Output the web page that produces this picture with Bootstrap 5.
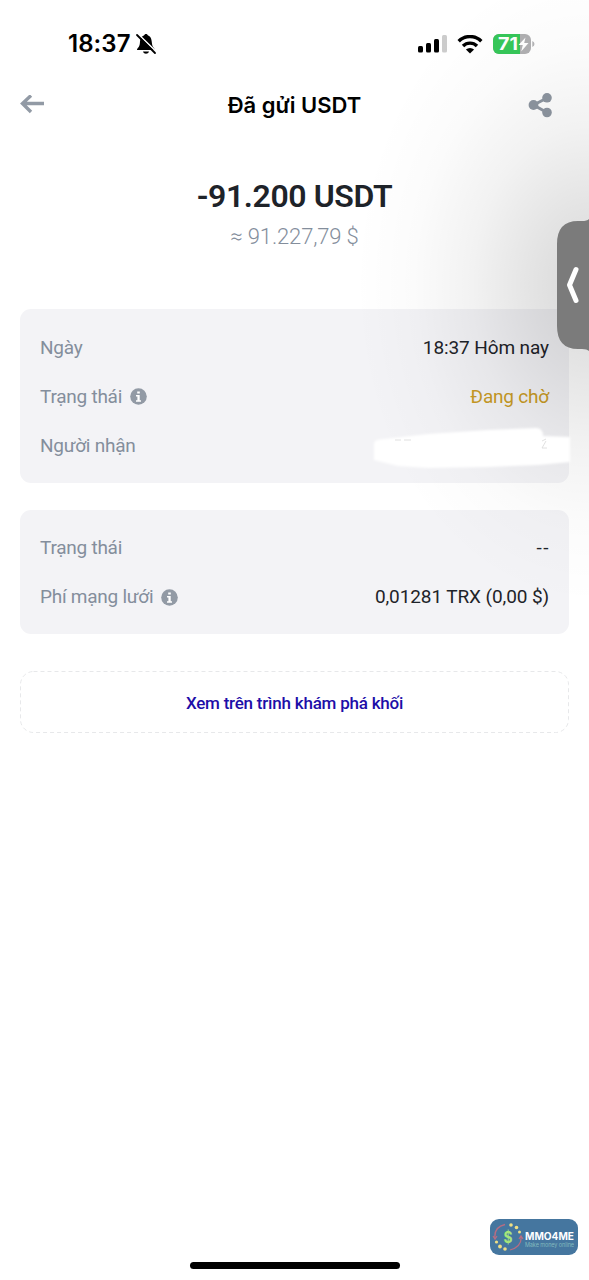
<!DOCTYPE html>
<html lang="vi">
<head>
<meta charset="utf-8">
<meta name="viewport" content="width=device-width, initial-scale=1">
<title>Đã gửi USDT</title>
<link rel="stylesheet" href="https://cdn.jsdelivr.net/npm/bootstrap@5.3.0/dist/css/bootstrap.min.css">
<style>
body{font-family:Roboto,"Noto Sans",sans-serif;color:#1e2329;background:#fff}
.screen{width:589px;height:1280px}
.statusbar{height:80px;padding:8px 54px 0 68px;font-family:Inter,sans-serif;color:#000}
.clock{font-size:24px;font-weight:600;letter-spacing:.05px}
.topbar{height:50px;padding:0 36px 0 20px}
.topbar h1{font:600 22px/1 Inter,sans-serif;color:#000;letter-spacing:0;padding-left:16px}
.amount{font-size:32px;font-weight:600;line-height:40px;letter-spacing:-.4px;padding-top:46px}
.approx{font-size:22px;line-height:30px;color:#848e9c;font-weight:300;letter-spacing:-.15px;margin-top:6px}
.panel{background:#f3f3f6;border-radius:11px;padding:14px 20px 12px;margin:0 20px}
.line{height:49.2px;font-size:19px;letter-spacing:-.1px}
.key{color:#848e9c;letter-spacing:-.25px}
.date{padding-top:2px}
.wait{color:#c99b25;letter-spacing:-.2px}
.explorer{margin:37px 20px 0;height:62px;font-size:17px;font-weight:500;color:#1d0ea8;text-decoration:none;letter-spacing:-.22px}
.shade{right:0;top:0;width:260px;height:640px;background:radial-gradient(ellipse 235px 320px at 260px 285px,rgba(0,0,0,.155),rgba(0,0,0,.105) 25%,rgba(0,0,0,.05) 50%,rgba(0,0,0,.015) 75%,transparent);pointer-events:none}
.handle{right:0;top:217px}
.scrub{left:368px;top:424px}
.home{left:190px;top:1262px;width:210px;height:7px;background:#000}
.brand{left:490px;top:1219px}
</style>
</head>
<body>
<main class="screen position-relative overflow-hidden">
  <header class="statusbar d-flex align-items-center justify-content-between">
    <div class="d-flex align-items-center">
      <span class="clock">18:37</span>
      <svg class="ms-1" width="22" height="22" viewBox="0 0 22 22"><path d="M2 17c0-2 2.600-2.500 2.900-7C5.100 5 7 3.300 9 2.600c.5-2.300 3.500-2.300 4 0 2 .7 3.600 2.400 3.900 7.400.3 4.500 2.900 5 2.900 7zM8 18.500h6c-.8 3-5.200 3-6 0z"/><path d="M2.500 .5 21.500 19" stroke="#fff" stroke-width="1.600"/><path d="M2 2 20 20" stroke="#000" stroke-width="1.800" stroke-linecap="round"/></svg>
    </div>
    <div class="d-flex align-items-center">
      <svg width="29" height="18" viewBox="0 0 29 18"><rect y="11" width="5" height="6.500" rx="1.500"/><rect x="8" y="8" width="5" height="9.500" rx="1.500"/><rect x="16" y="4" width="5" height="13.500" rx="1.500"/><rect x="24" width="5" height="17.500" rx="1.500" fill="#ccc"/></svg>
      <svg style="margin-left:10px" width="26" height="19" viewBox="0 0 26 19" fill="none" stroke="#000" stroke-width="3.400"><path d="M1.700 6.200a16 16 0 0 1 22.600 0M6 11a10 10 0 0 1 14 0"/><path d="M13 18.500 8.900 14.500a6 6 0 0 1 8.200 0z" fill="#000" stroke="none"/></svg>
      <svg style="margin-left:10px" width="42" height="20" viewBox="0 0 42 20"><defs><clipPath id="cell"><rect width="38" height="20" rx="6"/></clipPath></defs><g clip-path="url(#cell)"><rect width="38" height="20" fill="#b0b0b2"/><rect width="27" height="20" fill="#36c759"/></g><path d="M39.300 7v6q2.200-1 2.200-3t-2.200-3" fill="#b4b4b6"/><text x="5" y="16.300" font-size="17.500" font-weight="700" fill="#fff" textLength="20" lengthAdjust="spacingAndGlyphs">71</text><path d="M32.500 3.500 25.500 11h4.300l-1.600 6.500L35.500 9h-4.300z" fill="#fff"/></svg>
    </div>
  </header>
  <nav class="topbar d-flex align-items-center justify-content-between">
    <svg width="25" height="20" viewBox="0 0 25 20" fill="none" stroke="#929aa5" stroke-width="3.400"><path d="M24 8.500H3M11 .5 2.500 8.500l8.500 8.500"/></svg>
    <h1 class="mb-0">Đã gửi USDT</h1>
    <svg width="25" height="25" viewBox="0 0 25 25" fill="#8e96a1"><path d="M19 5 5.500 12 19 19.500" fill="none" stroke="#8e96a1" stroke-width="3"/><circle cx="19" cy="4.800" r="4.800"/><circle cx="5.500" cy="12" r="4.900"/><circle cx="19" cy="19.500" r="4.800"/></svg>
  </nav>
  <section class="text-center">
    <div class="amount">-91.200 USDT</div>
    <div class="approx">≈ 91.227,79 $</div>
  </section>
  <section class="panel" style="margin-top:57px">
    <div class="line d-flex align-items-center justify-content-between date"><span class="key">Ngày</span><span>18:37 Hôm nay</span></div>
    <div class="line d-flex align-items-center justify-content-between"><span class="key d-flex align-items-center gap-2">Trạng thái <svg width="17" height="17" viewBox="0 0 17 17"><circle cx="8.500" cy="8.500" r="8.300" fill="#929aa5"/><path d="M7.200 3.500h2.600v2H7.200zM6 7h3.700v5.200H11v1.500H6v-1.500h1.400V8.500H6z" fill="#fff"/></svg></span><span class="wait">Đang chờ</span></div>
    <div class="line d-flex align-items-center"><span class="key">Người nhận</span></div>
  </section>
  <section class="panel" style="margin-top:27px">
    <div class="line d-flex align-items-center justify-content-between"><span class="key">Trạng thái</span><span style="letter-spacing:1.500px;margin-right:-1px">--</span></div>
    <div class="line d-flex align-items-center justify-content-between"><span class="key d-flex align-items-center gap-2">Phí mạng lưới <svg width="17" height="17" viewBox="0 0 17 17"><circle cx="8.500" cy="8.500" r="8.300" fill="#929aa5"/><path d="M7.200 3.500h2.600v2H7.200zM6 7h3.700v5.200H11v1.500H6v-1.500h1.400V8.500H6z" fill="#fff"/></svg></span><span>0,01281 TRX (0,00 $)</span></div>
  </section>
  <a href="#" class="explorer d-flex align-items-center justify-content-center position-relative">
    <svg class="position-absolute top-0 start-0 w-100 h-100" fill="none"><rect x=".5" y=".5" width="548" height="61" rx="13" stroke="#e7e8ea" stroke-dasharray="4 3"/></svg>
    <span class="pt-1">Xem trên trình khám phá khối</span>
  </a>
  <div class="shade position-absolute"></div>
  <svg class="scrub position-absolute" width="210" height="50" viewBox="0 0 210 50"><defs><filter id="soft"><feGaussianBlur stdDeviation="1"/></filter></defs><path d="M6 20Q6 16 12 15.500L60 10 120 6 168 4Q175 4 175 12L202 13V38L170 41 120 43 60 44 30 42 6 36z" fill="#fff" filter="url(#soft)"/><path d="M27 16h6m3 0h7M174 17l4-2m-4 9 4-7m-4 7h5" stroke="#d8d8d8" stroke-width=".8" fill="none"/></svg>
  <svg class="handle position-absolute" width="32" height="136" viewBox="0 0 32 136"><path d="M32 2Q30 4 25 4H21Q0 4 0 27V109Q0 132 21 132H25Q30 132 32 134z" fill="#7b7b7b"/><path d="M19 52.500 12.500 68l6.500 15.500" fill="none" stroke="#fff" stroke-width="5" stroke-linecap="round" stroke-linejoin="round"/></svg>
  <svg class="brand position-absolute" width="88" height="36" viewBox="0 0 88 36"><rect width="88" height="36" rx="9" fill="#45769f"/><g fill="none" stroke="#b66d83" stroke-width="1.300"><path d="M5 20C4 12 8 7 15 5.500M31 17c1 8-4 12-11 14"/><path d="m3 17 2 3 2-3M29 20l2-3 2 3"/></g><g fill="#f0df83"><circle cx="21" cy="6" r="1.800"/><circle cx="26.500" cy="8.500" r="1.800"/><circle cx="29.500" cy="13" r="1.500"/><circle cx="6.500" cy="23" r="1.600"/><circle cx="10" cy="27.500" r="1.900"/><circle cx="15" cy="30" r="1.800"/></g><text x="13.500" y="23.500" font-family="Inter" font-weight="700" font-size="16" fill="#a5e57b" textLength="9" lengthAdjust="spacingAndGlyphs">$</text><text x="35" y="21" font-family="Inter" font-weight="700" font-size="10" fill="#fff" textLength="49" lengthAdjust="spacingAndGlyphs">MMO4ME</text><text x="35" y="28" font-family="Inter" font-size="5.500" fill="#81b9bd" textLength="49">Make money online</text></svg>
  <div class="home position-absolute rounded-pill"></div>
</main>
<script src="https://cdn.jsdelivr.net/npm/bootstrap@5.3.0/dist/js/bootstrap.bundle.min.js"></script>
</body>
</html>
